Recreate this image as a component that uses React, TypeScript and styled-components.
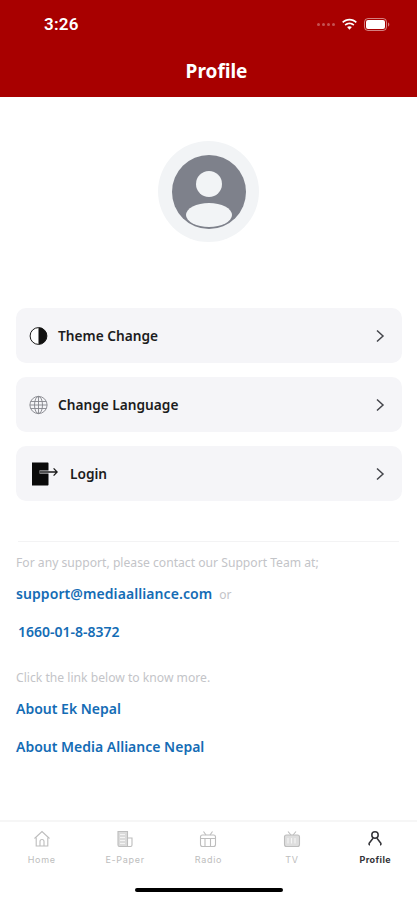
import * as React from 'react';
import styled, { createGlobalStyle } from 'styled-components';

const GlobalStyle = createGlobalStyle`
  html, body {
    margin: 0;
    padding: 0;
    background: #ffffff;
  }
  body {
    font-family: "Noto Sans", "Open Sans", sans-serif;
  }
`;

const Screen = styled.div`
  width: 417px;
  height: 900px;
  display: flex;
  flex-direction: column;
  overflow: hidden;
  background: #ffffff;
`;

const Header = styled.header`
  height: 97px;
  flex: none;
  background: #a80000;
  color: #ffffff;
  display: flex;
  flex-direction: column;
`;

const StatusBar = styled.div`
  height: 48px;
  padding: 0 27px 0 44px;
  display: flex;
  align-items: center;
  justify-content: space-between;
`;

const Clock = styled.span`
  font-family: "Roboto", sans-serif;
  font-size: 17px;
  font-weight: 600;
  letter-spacing: 0.2px;
`;

const StatusIcons = styled.div`
  display: flex;
  align-items: center;
  gap: 6px;
`;

const SignalDots = styled.div`
  display: flex;
  gap: 2px;
`;

const SignalDot = styled.span`
  width: 3px;
  height: 3px;
  border-radius: 50%;
  background: rgba(255, 255, 255, 0.32);
`;

const Title = styled.h1`
  margin: 11px 0 0;
  padding-left: 16px;
  text-align: center;
  font-size: 19px;
  line-height: 24px;
  font-weight: 700;
`;

const Main = styled.main`
  flex: 1;
  padding: 44px 16px 0;
  display: flex;
  flex-direction: column;
`;

const AvatarRing = styled.div`
  width: 101px;
  height: 101px;
  margin: 0 auto 66px;
  border-radius: 50%;
  background: #f2f4f6;
  display: flex;
  align-items: center;
  justify-content: center;
`;

const Menu = styled.div`
  margin-right: -1px;
  display: flex;
  flex-direction: column;
  gap: 14px;
`;

const MenuRow = styled.div`
  height: 55px;
  padding: 0 17px 0 13px;
  border-radius: 10px;
  background: #f5f5f8;
  display: flex;
  align-items: center;
`;

const MenuLabel = styled.span<{ $gap: number }>`
  margin-left: ${p => p.$gap}px;
  flex: 1;
  font-size: 13.7px;
  font-weight: 600;
  color: #1c1c20;
`;

const Divider = styled.hr`
  margin: 40px 2px 12px;
  border: 0;
  border-top: 1px solid #f3f3f4;
`;

const Hint = styled.p`
  margin: 0;
  font-size: 12.15px;
  line-height: 18px;
  color: #c3c4c8;
`;

const ContactRow = styled.div`
  margin-top: 12px;
  height: 20px;
  display: flex;
  align-items: center;
  gap: 7px;
`;

const Link = styled.a<{ $indent?: boolean; $wide?: boolean }>`
  font-size: 14px;
  line-height: 20px;
  font-weight: 600;
  color: #146cb5;
  padding-left: ${p => (p.$indent ? 2 : 0)}px;
  letter-spacing: ${p => (p.$wide ? '0.08px' : '0')};
`;

const Or = styled.span`
  font-size: 12px;
  color: #c3c4c8;
`;

const LinkBlock = styled.div<{ $top: number }>`
  margin-top: ${p => p.$top}px;
  display: flex;
`;

const TabBar = styled.nav`
  height: 80px;
  flex: none;
  border-top: 2px solid #f6f6f6;
  position: relative;
  display: grid;
  grid-template-columns: repeat(5, 1fr);
  padding-top: 8px;
  box-sizing: border-box;
`;

const Tab = styled.div<{ $active?: boolean }>`
  display: flex;
  flex-direction: column;
  align-items: center;
  gap: 6px;
  color: ${p => (p.$active ? '#333338' : '#bdbdbd')};
  font-family: "Inter", sans-serif;
  font-size: 9px;
  line-height: 12px;
  letter-spacing: ${p => (p.$active ? '0.4px' : '0.7px')};
  font-weight: ${p => (p.$active ? 700 : 400)};
`;

const HomeIndicator = styled.div`
  position: absolute;
  left: 135px;
  bottom: 8px;
  width: 148px;
  height: 4px;
  border-radius: 2px;
  background: #000000;
`;

const Chevron = () => (
  <svg width="10" height="14" viewBox="0 0 10 14" fill="none" stroke="#44454b" strokeWidth="1.5">
    <path d="M2 1.5 L8 7 L2 12.5" />
  </svg>
);

const Wifi = () => (
  <svg width="17" height="13" viewBox="0 0 17 13" fill="#ffffff">
    <path d="M8.5 2.6c2.4 0 4.6.9 6.2 2.5l1.2-1.3C13.9 1.9 11.3.8 8.5.8S3.1 1.9 1.1 3.8l1.2 1.3c1.6-1.6 3.8-2.5 6.2-2.5z" />
    <path d="M8.5 6.2c1.4 0 2.7.5 3.7 1.5l1.2-1.3c-1.3-1.2-3-2-4.9-2s-3.6.8-4.9 2l1.2 1.3c1-1 2.3-1.5 3.7-1.5z" />
    <path d="M8.5 8.2c-.9 0-1.8.4-2.4.9l2.4 2.7 2.4-2.7c-.6-.5-1.5-.9-2.4-.9z" />
  </svg>
);

const Battery = () => (
  <svg width="26" height="13" viewBox="0 0 26 13">
    <rect x="0.5" y="0.5" width="22" height="12" rx="3.5" fill="none" stroke="#ffffff" strokeOpacity="0.5" />
    <rect x="2" y="2" width="19" height="9" rx="2" fill="#ffffff" />
    <path d="M24 4.5c.8.3 1.3 1 1.3 2s-.5 1.7-1.3 2z" fill="#ffffff" fillOpacity="0.5" />
  </svg>
);

const Avatar = () => (
  <svg width="74" height="74" viewBox="0 0 74 74">
    <circle cx="37" cy="37" r="37" fill="#7e818b" />
    <circle cx="37" cy="29" r="13" fill="#f2f4f6" />
    <ellipse cx="37" cy="60" rx="23" ry="12" fill="#f2f4f6" />
  </svg>
);

const ThemeIcon = () => (
  <svg width="20" height="20" viewBox="0 0 20 20">
    <circle cx="9.5" cy="10" r="8.4" fill="#ffffff" stroke="#1a1a1a" strokeWidth="1" />
    <path d="M9.5 1.6a8.4 8.4 0 0 1 0 16.8z" fill="#111111" />
  </svg>
);

const GlobeIcon = () => (
  <svg width="20" height="20" viewBox="0 0 20 20" fill="none" stroke="#85868c" strokeWidth="0.9">
    <circle cx="9.5" cy="10" r="8.6" />
    <ellipse cx="9.5" cy="10" rx="4" ry="8.6" />
    <path d="M9.5 1.4v17.2M1.6 6.5h15.8M.9 10h17.2M1.6 13.5h15.8" />
  </svg>
);

const LoginIcon = () => (
  <svg width="29" height="24" viewBox="0 0 29 24">
    <path d="M3 0.5h15.5c.6 0 1 .4 1 1V8.6H10.5v2.8h9v11c0 .6-.4 1-1 1H3z" fill="#0a0a0a" />
    <path d="M10.5 10H28M24.6 6.4l3.6 3.6-3.6 3.6" fill="none" stroke="#1a1a1a" strokeWidth="1.3" />
  </svg>
);

const HomeTabIcon = () => (
  <svg width="18" height="18" viewBox="0 0 18 18" fill="none" stroke="currentColor" strokeWidth="1.1">
    <path d="M1.5 8.5 9 1.5l7.5 7" />
    <path d="M3.2 7.5v8.5h11.6V7.5" />
    <path d="M7 16v-4.5a2 2 0 0 1 4 0V16" />
  </svg>
);

const PaperTabIcon = () => (
  <svg width="18" height="18" viewBox="0 0 18 18" fill="none" stroke="currentColor" strokeWidth="1.1">
    <path d="M2 1.5h9.5v15H3.5A1.5 1.5 0 0 1 2 15z" fill="currentColor" fillOpacity="0.55" />
    <path d="M11.5 8h4.5v7a1.5 1.5 0 0 1-1.5 1.5h-3" />
    <path d="M4 4.5h5M4 7.5h5M4 10.5h5M4 13.5h5" stroke="#ffffff" strokeOpacity="0.7" />
  </svg>
);

const RadioTabIcon = () => (
  <svg width="18" height="18" viewBox="0 0 18 18" fill="none" stroke="currentColor" strokeWidth="1.1">
    <rect x="1.5" y="5" width="15" height="11.5" rx="2" />
    <path d="M4.5 1.5 7 5M13.5 1.5 11 5M1.5 8.5h15M11.5 8.5v8M6 8.5v8" />
  </svg>
);

const TvTabIcon = () => (
  <svg width="18" height="18" viewBox="0 0 18 18" fill="none" stroke="currentColor" strokeWidth="1.1">
    <rect x="1.5" y="5" width="15" height="11.5" rx="2" fill="currentColor" fillOpacity="0.5" />
    <path d="M5 1.5 8 5M13 1.5 10 5" />
    <path d="M5 8v5.5M8.5 8v5.5M12 8v5.5" stroke="#ffffff" strokeOpacity="0.7" />
  </svg>
);

const ProfileTabIcon = () => (
  <svg width="18" height="18" viewBox="0 0 18 18" fill="none" stroke="currentColor" strokeWidth="1.5">
    <circle cx="9" cy="5" r="3.2" />
    <path d="M7 8.2 3.2 13.2c-.5.8 0 1.6.8 1.6M11 8.2l3.8 5c.5.8 0 1.6-.8 1.6" />
  </svg>
);

const App = () => (
  <Screen>
    <GlobalStyle />
    <Header>
      <StatusBar>
        <Clock>3:26</Clock>
        <StatusIcons>
          <SignalDots>
            <SignalDot />
            <SignalDot />
            <SignalDot />
            <SignalDot />
          </SignalDots>
          <Wifi />
          <Battery />
        </StatusIcons>
      </StatusBar>
      <Title>Profile</Title>
    </Header>
    <Main>
      <AvatarRing>
        <Avatar />
      </AvatarRing>
      <Menu>
        <MenuRow>
          <ThemeIcon />
          <MenuLabel $gap={9}>Theme Change</MenuLabel>
          <Chevron />
        </MenuRow>
        <MenuRow>
          <GlobeIcon />
          <MenuLabel $gap={9}>Change Language</MenuLabel>
          <Chevron />
        </MenuRow>
        <MenuRow>
          <LoginIcon />
          <MenuLabel $gap={12}>Login</MenuLabel>
          <Chevron />
        </MenuRow>
      </Menu>
      <Divider />
      <Hint>For any support, please contact our Support Team at;</Hint>
      <ContactRow>
        <Link $wide>support@mediaalliance.com</Link>
        <Or>or</Or>
      </ContactRow>
      <LinkBlock $top={18}>
        <Link $indent>1660-01-8-8372</Link>
      </LinkBlock>
      <LinkBlock $top={27}>
        <Hint>Click the link below to know more.</Hint>
      </LinkBlock>
      <LinkBlock $top={12}>
        <Link>About Ek Nepal</Link>
      </LinkBlock>
      <LinkBlock $top={18}>
        <Link>About Media Alliance Nepal</Link>
      </LinkBlock>
    </Main>
    <TabBar>
      <Tab><HomeTabIcon />Home</Tab>
      <Tab><PaperTabIcon />E-Paper</Tab>
      <Tab><RadioTabIcon />Radio</Tab>
      <Tab><TvTabIcon />TV</Tab>
      <Tab $active><ProfileTabIcon />Profile</Tab>
      <HomeIndicator />
    </TabBar>
  </Screen>
);

export default App;
